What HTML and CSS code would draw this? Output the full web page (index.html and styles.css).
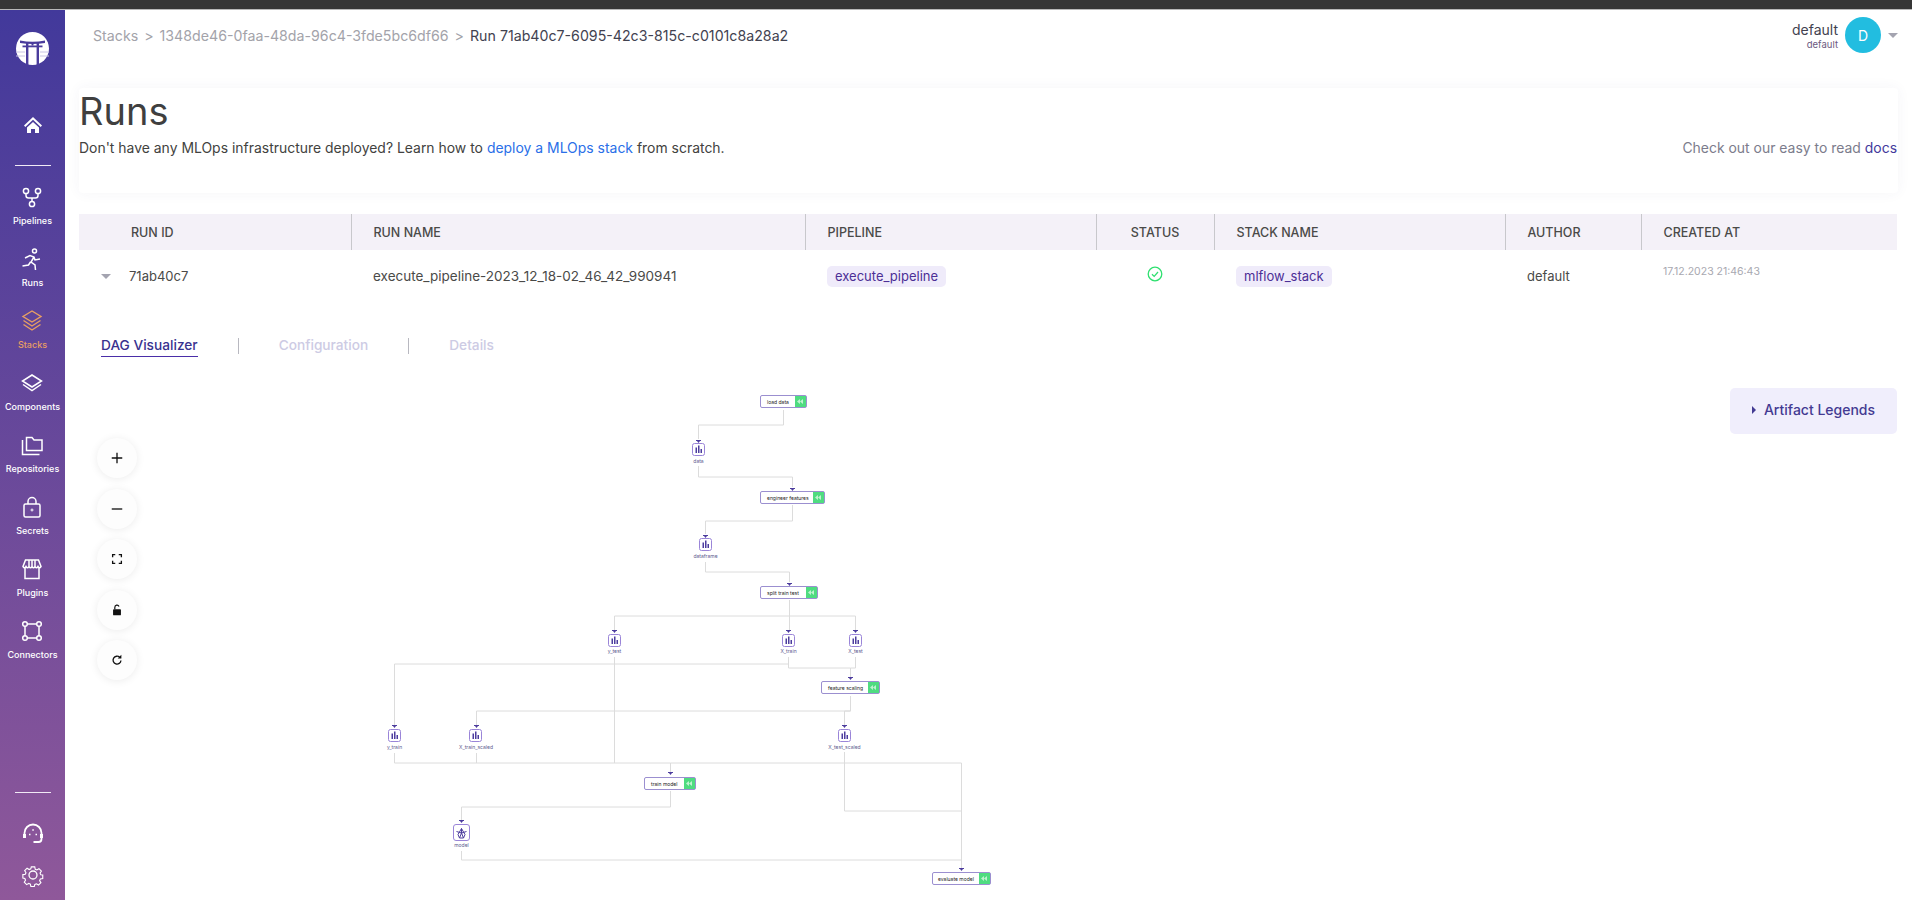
FILE: index.html
```html
<!DOCTYPE html>
<html lang="en">
<head>
  <meta charset="UTF-8">
  <title>Runs</title>
  <link rel="stylesheet" href="styles.css">
</head>
<body>
  <div class="window-bar"></div>
  <div class="app">
    <aside class="sidebar">
      <svg class="logo" viewBox="0 0 33 33">
        <circle cx="16.500" cy="16.500" r="16.500" fill="#fff"/>
        <path d="M4 8.500q12.500 2.500 25 0v2.500q-12.500 2-25 0z" fill="#4a3c9c"/>
        <path d="M6.500 13.500h20v1.800h-20z" fill="#4a3c9c"/>
        <path d="M10 10h2.400v23h-2.400zM20.600 10h2.400v23h-2.400z" fill="#4a3c9c"/>
        <path d="M15.500 10h2v3.500h-2z" fill="#4a3c9c"/>
        <path d="M0 20h9M0 24h9M24 20h9M24 24h9" stroke="#c9c4e4" stroke-width="1"/>
      </svg>
      <svg class="icon home" viewBox="0 0 24 24"><path d="M12 4 3 12.500l1.300 1.400L12 6.800l7.700 7.100 1.300-1.400z" fill="#fff"/><path d="M6 14.500 12 9l6 5.500V20h-4v-4h-4v4H6z" fill="#fff"/></svg>
      <div class="rule"></div>
      <nav class="nav">
        <a class="nav-item">
          <svg class="icon" viewBox="0 0 24 24" fill="none" stroke="#fff" stroke-width="1.500"><circle cx="6" cy="6" r="2.600"/><circle cx="18" cy="6" r="2.600"/><circle cx="12" cy="19" r="2.600"/><path d="M6 8.600v1.900q0 2.500 2.500 2.500h7q2.500 0 2.500-2.500V8.600M12 13v3.400"/></svg>
          <span>Pipelines</span>
        </a>
        <a class="nav-item">
          <svg class="icon" viewBox="0 0 24 24" fill="none" stroke="#fff" stroke-width="1.500"><circle cx="14.500" cy="4" r="2"/><path d="M5 11l5-2.500 4 1.500 1 3 5-1M14 10l-3 5 4 3 .5 5M10.500 15l-2 3-6 1"/></svg>
          <span>Runs</span>
        </a>
        <a class="nav-item active">
          <svg class="icon" viewBox="0 0 24 24" fill="none" stroke="#e89f63" stroke-width="1.400"><path d="M12 2 3 7.500l9 5.500 9-5.500zM3.500 11.500 12 17l8.500-5.500M3.500 15.500 12 21l8.500-5.500"/></svg>
          <span>Stacks</span>
        </a>
        <a class="nav-item">
          <svg class="icon" viewBox="0 0 24 24" fill="none" stroke="#fff" stroke-width="1.500"><path d="M12 4 2.500 10l9.500 6 9.500-6zM3 13.500 12 19.500l9-6"/></svg>
          <span>Components</span>
        </a>
        <a class="nav-item">
          <svg class="icon" viewBox="0 0 24 24" fill="none" stroke="#fff" stroke-width="1.500"><path d="M6.500 4.500v13h15.500V7h-8l-2-2.500zM2.500 7v14.500h17"/></svg>
          <span>Repositories</span>
        </a>
        <a class="nav-item">
          <svg class="icon" viewBox="0 0 24 24" fill="none" stroke="#fff" stroke-width="1.500"><rect x="4" y="9" width="16" height="13" rx="1.500"/><path d="M8 9V6.500a4 4 0 0 1 8 0V9"/><circle cx="12" cy="15" r="1" stroke-width="1"/></svg>
          <span>Secrets</span>
        </a>
        <a class="nav-item">
          <svg class="icon" viewBox="0 0 24 24" fill="none" stroke="#fff" stroke-width="1.500"><path d="M5 11v10.500h14V11"/><path d="M5.500 3h13L21 9.500q-1.500 2.500-3 0-1.500 2.500-3 0-1.500 2.500-3 0-1.500 2.500-3 0-1.500 2.500-3 0-1.500 2.500-3 0zM9 3v6M12 3v6M15 3v6"/></svg>
          <span>Plugins</span>
        </a>
        <a class="nav-item">
          <svg class="icon" viewBox="0 0 24 24" fill="none" stroke="#fff" stroke-width="1.500"><circle cx="5" cy="5" r="2.300"/><circle cx="19" cy="5" r="2.300"/><circle cx="5" cy="19" r="2.300"/><circle cx="19" cy="19" r="2.300"/><path d="M7.300 5h9.400M7.300 19h9.400M5 7.300v9.400M19 7.300v9.400"/></svg>
          <span>Connectors</span>
        </a>
      </nav>
      <div class="sidebar-bottom">
        <div class="rule"></div>
        <svg class="icon" viewBox="0 0 24 24" fill="none" stroke="#fff" stroke-width="1.800"><path d="M3.500 17v-5a8.500 8.500 0 0 1 17 0v6q0 3-3 3h-5"/><path d="M3.500 13v4M20.500 13v4" stroke-width="3"/><path d="M8 13.500h1.500M14.500 13.500H16M11.300 9h1.500" stroke-width="1.500"/></svg>
        <svg class="icon" viewBox="0 0 24 24" fill="none" stroke="#fff" stroke-width="1.300"><circle cx="12" cy="12" r="4"/><path d="M10 2.500h4l.6 2.800 1.900.8 2.400-1.500 2.800 2.800-1.500 2.400.8 1.900 2.300.3v4l-2.800.6-.8 1.900 1.500 2.400-2.800 2.800-2.400-1.500-1.900.8-.6 2.300h-4l-.6-2.800-1.900-.8-2.400 1.500-2.800-2.800 1.500-2.400-.8-1.900-2.300-.6v-4l2.800-.3.8-1.900-1.500-2.400 2.800-2.800 2.400 1.500 1.900-.8z" transform="translate(1.700 1.700) scale(.86)"/></svg>
      </div>
    </aside>

    <main class="main">
      <header class="topbar">
        <div class="crumbs">
          <span>Stacks</span><span class="crumb-sep">&gt;</span><span>1348de46-0faa-48da-96c4-3fde5bc6df66</span><span class="crumb-sep">&gt;</span><span class="crumb-current">Run 71ab40c7-6095-42c3-815c-c0101c8a28a2</span>
        </div>
        <div class="user">
          <div class="user-names">
            <div class="user-name">default</div>
            <div class="user-role">default</div>
          </div>
          <div class="avatar">D</div>
          <div class="caret"></div>
        </div>
      </header>

      <section class="intro">
        <h1>Runs</h1>
        <div class="intro-row">
          <p>Don't have any MLOps infrastructure deployed? Learn how to <a href="#">deploy a MLOps stack</a> from scratch.</p>
          <p class="intro-docs">Check out our easy to read <a href="#">docs</a></p>
        </div>
      </section>

      <table class="runs">
        <thead>
          <tr>
            <th class="col-id">RUN ID</th>
            <th class="col-name">RUN NAME</th>
            <th class="col-pipe">PIPELINE</th>
            <th class="col-status">STATUS</th>
            <th class="col-stack">STACK NAME</th>
            <th class="col-author">AUTHOR</th>
            <th>CREATED AT</th>
          </tr>
        </thead>
        <tbody>
          <tr>
            <td><div class="id-cell"><div class="caret"></div>71ab40c7</div></td>
            <td class="name-cell">execute_pipeline-2023_12_18-02_46_42_990941</td>
            <td><span class="badge">execute_pipeline</span></td>
            <td class="status-cell">
              <svg class="check" viewBox="0 0 16 16" fill="none" stroke="#2fe070" stroke-width="1.300"><circle cx="8" cy="8" r="6.800"/><path d="M5 8.200l2.200 2.200L11 6"/></svg>
            </td>
            <td><span class="badge">mlflow_stack</span></td>
            <td>default</td>
            <td class="date-cell">17.12.2023 21:46:43</td>
          </tr>
        </tbody>
      </table>

      <div class="tabs">
        <a class="tab current">DAG Visualizer</a>
        <span class="tab-sep"></span>
        <a class="tab">Configuration</a>
        <span class="tab-sep"></span>
        <a class="tab">Details</a>
      </div>

      <section class="dag">
        <div class="zoom-controls">
          <button class="zoom-btn"><svg viewBox="0 0 16 16"><path d="M8 2v12M2 8h12" stroke="#111" stroke-width="1.500"/></svg></button>
          <button class="zoom-btn"><svg viewBox="0 0 16 16"><path d="M2 8h12" stroke="#111" stroke-width="1.500"/></svg></button>
          <button class="zoom-btn"><svg viewBox="0 0 16 16" fill="none"><path d="M3 6V3h3M10 3h3v3M13 10v3h-3M6 13H3v-3" stroke="#111" stroke-width="1.500"/></svg></button>
          <button class="zoom-btn"><svg viewBox="0 0 16 16"><rect x="3.500" y="7" width="9" height="7" rx="1" fill="#111"/><path d="M5.500 7V5a2.500 2.500 0 0 1 4.800-1" fill="none" stroke="#111" stroke-width="1.400"/></svg></button>
          <button class="zoom-btn"><svg viewBox="0 0 16 16" fill="none"><path d="M12.500 8.500a4.500 4.500 0 1 1-1.400-3.600" stroke="#111" stroke-width="1.500"/><path d="M13 2v4.200H8.800z" fill="#111"/></svg></button>
        </div>

        <svg class="graph" width="640" height="515" viewBox="380 385 640 515">
          <g class="edges">
            <path d="M783.500 410V425H698.500V439"/>
            <path d="M698.500 466V477H792.500V487"/>
            <path d="M792.500 505V521H705.500V534"/>
            <path d="M705.500 562V572H789.500V582"/>
            <path d="M789.500 600V616H614.500V630"/>
            <path d="M789.500 600V630"/>
            <path d="M789.500 616H855.500V630"/>
            <path d="M788.500 657V668H850.500V678"/>
            <path d="M855.500 657V668H850.500"/>
            <path d="M788.500 657V664H394.500V725"/>
            <path d="M850.500 696V711H476.500V725"/>
            <path d="M850.500 696V711H844.500V725"/>
            <path d="M394.500 753V763H670.500V773"/>
            <path d="M476.500 753V763"/>
            <path d="M614.500 657V763"/>
            <path d="M670.500 763H961.500V868"/>
            <path d="M670.500 791V807H461.500V820"/>
            <path d="M461.500 851V860H961.500"/>
            <path d="M844.500 752V811H961.500"/>
          </g>

          <g class="arrows">
            <path d="M696 440h5v1l-1 0-1.500 2-1.500-2-1 0z"/>
            <path d="M790 488h5v1l-1 0-1.500 2-1.500-2-1 0z"/>
            <path d="M703 535h5v1l-1 0-1.500 2-1.500-2-1 0z"/>
            <path d="M787 583h5v1l-1 0-1.500 2-1.500-2-1 0z"/>
            <path d="M612 630h5v1l-1 0-1.500 2-1.500-2-1 0z"/>
            <path d="M786 630h5v1l-1 0-1.500 2-1.500-2-1 0z"/>
            <path d="M853 630h5v1l-1 0-1.500 2-1.500-2-1 0z"/>
            <path d="M848 677h5v1l-1 0-1.500 2-1.500-2-1 0z"/>
            <path d="M392 725h5v1l-1 0-1.500 2-1.500-2-1 0z"/>
            <path d="M474 725h5v1l-1 0-1.500 2-1.500-2-1 0z"/>
            <path d="M842 725h5v1l-1 0-1.500 2-1.500-2-1 0z"/>
            <path d="M668 772h5v1l-1 0-1.500 2-1.500-2-1 0z"/>
            <path d="M459 820h5v1l-1 0-1.500 2-1.500-2-1 0z"/>
            <path d="M959 868h5v1l-1 0-1.500 2-1.500-2-1 0z"/>
          </g>

          <g class="step">
            <rect x="760.500" y="395.500" width="46" height="12" rx="1.500"/><rect class="done" x="795" y="396" width="11" height="11"/><path class="done-mark" d="M803 399l-3 2.500 3 2.500zM800 399l-3 2.500 3 2.500z"/>
            <text x="767" y="403.500">load data</text>
          </g>
          <g class="step">
            <rect x="760.500" y="491.500" width="64" height="12" rx="1.500"/><rect class="done" x="813" y="492" width="11" height="11"/><path class="done-mark" d="M821 495l-3 2.500 3 2.500zM818 495l-3 2.500 3 2.500z"/>
            <text x="767" y="499.500">engineer features</text>
          </g>
          <g class="step">
            <rect x="760.500" y="586.500" width="57" height="12" rx="1.500"/><rect class="done" x="806" y="587" width="11" height="11"/><path class="done-mark" d="M814 590l-3 2.500 3 2.500zM811 590l-3 2.500 3 2.500z"/>
            <text x="767" y="594.500">split train test</text>
          </g>
          <g class="step">
            <rect x="821.500" y="681.500" width="58" height="12" rx="1.500"/><rect class="done" x="868" y="682" width="11" height="11"/><path class="done-mark" d="M876 685l-3 2.500 3 2.500zM873 685l-3 2.500 3 2.500z"/>
            <text x="828" y="689.500">feature scaling</text>
          </g>
          <g class="step">
            <rect x="644.500" y="777.500" width="51" height="12" rx="1.500"/><rect class="done" x="684" y="778" width="11" height="11"/><path class="done-mark" d="M692 781l-3 2.500 3 2.500zM689 781l-3 2.500 3 2.500z"/>
            <text x="651" y="785.500">train model</text>
          </g>
          <g class="step">
            <rect x="932.500" y="872.500" width="58" height="12" rx="1.500"/><rect class="done" x="979" y="873" width="11" height="11"/><path class="done-mark" d="M987 876l-3 2.500 3 2.500zM984 876l-3 2.500 3 2.500z"/>
            <text x="938" y="880.500">evaluate model</text>
          </g>

          <g class="artifact">
            <rect x="692.500" y="443.500" width="12" height="12" rx="2"/><path class="bars" d="M695.500 447.500h1.500v5.500h-1.500zM698 445.500h1.500v7.500H698zM700.500 449h1.500v4h-1.500z"/>
            <text x="698.500" y="463">data</text>
          </g>
          <g class="artifact">
            <rect x="699.500" y="538.500" width="12" height="12" rx="2"/><path class="bars" d="M702.500 542.500h1.500v5.500h-1.500zM705 540.500h1.500v7.500H705zM707.500 544h1.500v4h-1.500z"/>
            <text x="705.500" y="558">dataframe</text>
          </g>
          <g class="artifact">
            <rect x="608.500" y="634.500" width="12" height="12" rx="2"/><path class="bars" d="M611.500 638.500h1.500v5.500h-1.500zM614 636.500h1.500v7.500H614zM616.500 640h1.500v4h-1.500z"/>
            <text x="614.500" y="653">y_test</text>
          </g>
          <g class="artifact">
            <rect x="782.500" y="634.500" width="12" height="12" rx="2"/><path class="bars" d="M785.500 638.500h1.500v5.500h-1.500zM788 636.500h1.500v7.500H788zM790.500 640h1.500v4h-1.500z"/>
            <text x="788.500" y="653">X_train</text>
          </g>
          <g class="artifact">
            <rect x="849.500" y="634.500" width="12" height="12" rx="2"/><path class="bars" d="M852.500 638.500h1.500v5.500h-1.500zM855 636.500h1.500v7.500H855zM857.500 640h1.500v4h-1.500z"/>
            <text x="855.500" y="653">X_test</text>
          </g>
          <g class="artifact">
            <rect x="388.500" y="729.500" width="12" height="12" rx="2"/><path class="bars" d="M391.500 733.500h1.500v5.500h-1.500zM394 731.500h1.500v7.500H394zM396.500 735h1.500v4h-1.500z"/>
            <text x="394.500" y="749">y_train</text>
          </g>
          <g class="artifact">
            <rect x="469.500" y="729.500" width="12" height="12" rx="2"/><path class="bars" d="M472.500 733.500h1.500v5.500h-1.500zM475 731.500h1.500v7.500H475zM477.500 735h1.500v4h-1.500z"/>
            <text x="476" y="749">X_train_scaled</text>
          </g>
          <g class="artifact">
            <rect x="838.500" y="729.500" width="12" height="12" rx="2"/><path class="bars" d="M841.500 733.500h1.500v5.500h-1.500zM844 731.500h1.500v7.500H844zM846.500 735h1.500v4h-1.500z"/>
            <text x="844.500" y="749">X_test_scaled</text>
          </g>
          <g class="artifact">
            <rect x="453.500" y="824.500" width="16" height="16" rx="2.500"/>
            <path class="model-mark" d="M461.500 828.500l-3.500 6 1.500 3.500h4l1.500-3.500zM456.500 831.500l5 1.500 5-1.500M461.500 833v-4.500M461.500 833l-2 5M461.500 833l2 5"/>
            <text x="461.500" y="847">model</text>
          </g>
        </svg>

        <button class="legend-btn"><span class="legend-caret"></span>Artifact Legends</button>
      </section>
    </main>
  </div>
</body>
</html>
```

FILE: styles.css
```css
html, body {
  margin: 0;
  padding: 0;
  height: 900px;
  overflow: hidden;
  background: #fff;
  font-family: "Inter", "Roboto", sans-serif;
  color: #424240;
}
.window-bar {
  height: 9px;
  background: #363636;
  border-bottom: 1px solid #b8b8b8;
}
.app {
  display: flex;
  height: 890px;
}

/* sidebar */
.sidebar {
  width: 65px;
  flex: none;
  display: flex;
  flex-direction: column;
  align-items: center;
  background: linear-gradient(180deg, #42399b 0%, #8f589a 100%);
  color: #fff;
}
.logo {
  width: 33px;
  height: 33px;
  margin-top: 22px;
}
.icon {
  width: 24px;
  height: 24px;
  display: block;
}
.home {
  margin-top: 48px;
}
.rule {
  width: 36px;
  height: 1px;
  background: #f1eaf6;
}
.home + .rule {
  margin-top: 28px;
}
.nav {
  margin-top: 19px;
  display: flex;
  flex-direction: column;
}
.nav-item {
  height: 62px;
  display: flex;
  flex-direction: column;
  align-items: center;
  gap: 6px;
  font-size: 9px;
  line-height: 12px;
  font-weight: 500;
  white-space: nowrap;
}
.nav-item.active {
  color: #e89f63;
}
.sidebar-bottom {
  margin-top: auto;
  padding-bottom: 13px;
  display: flex;
  flex-direction: column;
  align-items: center;
  gap: 18px;
}
.sidebar-bottom .rule {
  margin-bottom: 10px;
}

/* top */
.main {
  flex: 1;
  min-width: 0;
  display: flex;
  flex-direction: column;
}
.topbar {
  height: 50px;
  padding: 0 14px 0 28px;
  display: flex;
  align-items: center;
  justify-content: space-between;
}
.crumbs {
  display: flex;
  font-size: 14.200px;
  color: #a3a3aa;
}
.crumb-sep {
  margin: 0 6px;
}
.crumb-current {
  color: #424250;
}
.user {
  display: flex;
  align-items: center;
}
.user-names {
  text-align: right;
  margin-right: 7px;
}
.user-name {
  font-size: 14px;
  line-height: 18px;
  color: #424250;
}
.user-role {
  font-size: 9.500px;
  line-height: 11px;
  color: #6b5a80;
}
.avatar {
  width: 36px;
  height: 36px;
  border-radius: 50%;
  background: #22bde0;
  color: #fff;
  font-size: 14px;
  display: flex;
  align-items: center;
  justify-content: center;
}
.caret {
  width: 0;
  height: 0;
  border-left: 5px solid transparent;
  border-right: 5px solid transparent;
  border-top: 5px solid #a4a4b0;
}
.user .caret {
  margin-left: 7px;
}

/* intro card */
.intro {
  margin: 28px 14px 0 14px;
  height: 105px;
  padding: 0 1px 0 0;
  border-radius: 4px;
  box-shadow: 0 0 14px rgba(60, 50, 120, 0.05);
}
.intro h1 {
  margin: 0;
  font-size: 38px;
  line-height: 46px;
  font-weight: 400;
  color: #3f3f3f;
}
.intro-row {
  margin-top: 2px;
  display: flex;
  justify-content: space-between;
  font-size: 13.950px;
  line-height: 24px;
}
.intro-row p {
  margin: 0;
}
.intro-row a {
  color: #2a6fe8;
  text-decoration: none;
}
.intro-docs {
  color: #7c7c8c;
}
.intro-row .intro-docs a {
  color: #443a9c;
}

/* table */
.runs {
  margin: 21px 15px 0 14px;
  width: 1818px;
  table-layout: fixed;
  border-collapse: collapse;
  font-size: 13px;
}
.runs th {
  box-sizing: border-box;
  height: 36px;
  padding: 0 0 0 22px;
  background: #f4f1f8;
  border-left: 1px solid #c8c8cc;
  text-align: left;
  font-size: 12.500px;
  font-weight: 500;
  color: #4a4a48;
}
.runs th:first-child {
  border-left: none;
}
.runs .col-id {
  width: 272px;
  padding-left: 52px;
}
.runs .col-name {
  width: 454px;
}
.runs .col-pipe {
  width: 291px;
}
.runs .col-status {
  width: 118px;
  text-align: center;
  padding-left: 0;
}
.runs .col-stack {
  width: 291px;
}
.runs .col-author {
  width: 136px;
}
.runs td {
  box-sizing: border-box;
  height: 52px;
  padding: 0 0 0 22px;
  color: #4a4a48;
}
.runs .name-cell {
  font-size: 13.500px;
}
.id-cell {
  display: flex;
  align-items: center;
  gap: 18px;
}
.badge {
  display: inline-block;
  padding: 0 8px;
  height: 21px;
  line-height: 21px;
  border-radius: 5px;
  background: #efebfa;
  color: #4c2f96;
}
.runs .status-cell {
  padding-left: 0;
  text-align: center;
}
.check {
  width: 16px;
  height: 16px;
  display: block;
  margin: -4px auto 0;
}
.runs .date-cell {
  font-size: 10.500px;
  color: #a8a8b0;
  vertical-align: top;
  padding-top: 15px;
}

/* tabs */
.tabs {
  margin: 33px 0 0 36px;
  height: 23px;
  display: flex;
  align-items: flex-start;
  gap: 40px;
  font-size: 13.700px;
  line-height: 21px;
  font-weight: 500;
  color: #cdcbe4;
}
.tab.current {
  color: #39328f;
  border-bottom: 1.500px solid #4a2ea8;
}
.tab-sep {
  width: 1px;
  height: 16px;
  margin-top: 3px;
  background: #b8b8c0;
}

/* dag */
.dag {
  flex: 1;
  min-height: 0;
  display: flex;
  align-items: flex-start;
  padding: 30px 15px 0 32px;
  overflow: hidden;
}
.zoom-controls {
  margin-top: 50px;
  display: flex;
  flex-direction: column;
  gap: 10.500px;
  flex: none;
}
.zoom-btn {
  width: 40px;
  height: 40px;
  border: none;
  border-radius: 50%;
  background: #fdfdfd;
  box-shadow: 0 1px 8px rgba(0, 0, 0, 0.08);
  display: flex;
  align-items: center;
  justify-content: center;
  padding: 0;
}
.zoom-btn svg {
  width: 14px;
  height: 14px;
}
.graph {
  flex: none;
  margin-left: 243px;
  margin-top: -3px;
}
.edges path {
  fill: none;
  stroke: #dcdcdc;
  stroke-width: 1;
}
.arrows path {
  fill: #4d3d9e;
}
.step rect {
  fill: #fff;
  stroke: #9b8fd0;
  stroke-width: 1;
}
.step rect.done {
  fill: #4fdc80;
  stroke: none;
}
.done-mark {
  fill: #bff2cf;
}
.step text {
  font-size: 5px;
  fill: #222;
}
.artifact rect {
  fill: #fff;
  stroke: #9a85d8;
  stroke-width: 1;
}
.bars {
  fill: #4d3d9e;
}
.model-mark {
  fill: none;
  stroke: #4d3d9e;
  stroke-width: 1;
}
.artifact text {
  font-size: 5px;
  fill: #5c5a8f;
  text-anchor: middle;
}
.legend-btn {
  margin-left: auto;
  width: 167px;
  height: 46px;
  flex: none;
  border: none;
  border-radius: 5px;
  background: #f0eefc;
  color: #433a92;
  font-family: inherit;
  font-size: 14px;
  font-weight: 500;
  display: flex;
  align-items: center;
  justify-content: center;
  gap: 8px;
  padding: 0 0 3px;
}
.legend-caret {
  width: 0;
  height: 0;
  border-top: 4px solid transparent;
  border-bottom: 4px solid transparent;
  border-left: 4px solid #433a92;
}
```
